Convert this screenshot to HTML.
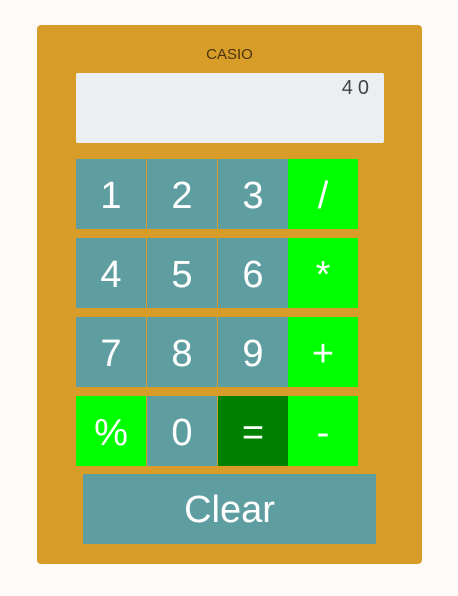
<html><head><style>
body{margin:0;background:#fffafa;font-family:"Liberation Sans",sans-serif;}
.card{position:absolute;left:37px;top:25px;width:385px;height:539px;background:#d89c28;border-radius:4px;}
.t{position:absolute;left:0;width:385px;top:21px;text-align:center;font-size:15px;color:#4a3510;}
.d{position:absolute;left:39px;top:48px;width:308px;height:70px;background:#eceff1;border-radius:2px;}
.d span{position:absolute;right:10px;top:4px;font-size:20px;color:#444;letter-spacing:5px;}
.b{position:absolute;width:70px;height:70px;box-sizing:border-box;padding-top:4px;background:#5f9ea0;color:#fff;font-size:38px;display:flex;align-items:center;justify-content:center;}
.g{background:#00ff00;}
.e{background:#008000;}
.c{position:absolute;left:46px;top:449px;width:293px;height:70px;box-sizing:border-box;padding-top:3px;background:#5f9ea0;color:#fff;font-size:38px;display:flex;align-items:center;justify-content:center;}
</style></head><body>
<div class="card">
<div class="t">CASIO</div>
<div class="d"><span>40</span></div>
<div class="b" style="left:39px;top:134px">1</div>
<div class="b" style="left:110px;top:134px">2</div>
<div class="b" style="left:181px;top:134px">3</div>
<div class="b g" style="left:251px;top:134px">/</div>
<div class="b" style="left:39px;top:213px">4</div>
<div class="b" style="left:110px;top:213px">5</div>
<div class="b" style="left:181px;top:213px">6</div>
<div class="b g" style="left:251px;top:213px">*</div>
<div class="b" style="left:39px;top:292px">7</div>
<div class="b" style="left:110px;top:292px">8</div>
<div class="b" style="left:181px;top:292px">9</div>
<div class="b g" style="left:251px;top:292px">+</div>
<div class="b g" style="left:39px;top:371px">%</div>
<div class="b" style="left:110px;top:371px">0</div>
<div class="b e" style="left:181px;top:371px">=</div>
<div class="b g" style="left:251px;top:371px">-</div>
<div class="c">Clear</div>
</div>
</body></html>
